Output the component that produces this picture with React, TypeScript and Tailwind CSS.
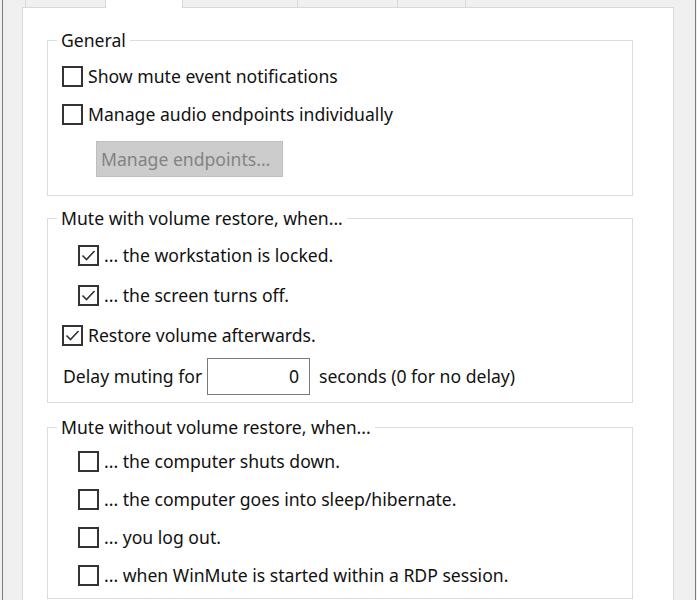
import React from "react";

function CheckBox({ checked }: { checked?: boolean }) {
  return (
    <div className="flex h-[21px] w-[21px] shrink-0 items-center justify-center border-2 border-[#333333] bg-white">
      {checked ? (
        <svg width="17" height="17" viewBox="0 0 17 17" fill="none">
          <path d="M2.5 8.5 L6.5 12.5 L14.5 4" stroke="#333333" strokeWidth="1.6" />
        </svg>
      ) : null}
    </div>
  );
}

function Row({
  label,
  checked,
  indent,
  h,
}: {
  label: string;
  checked?: boolean;
  indent?: boolean;
  h: string;
}) {
  return (
    <div className={`flex items-center gap-[5px] ${h} ${indent ? "pl-[30px]" : "pl-[14px]"}`}>
      <CheckBox checked={checked} />
      <span className="whitespace-nowrap">{label}</span>
    </div>
  );
}

export default function App() {
  return (
    <div
      className="h-[600px] w-[697px] overflow-hidden bg-[#f0f0f0] pl-[2px] pr-[1px] text-[17.6px] text-[#111111]"
      style={{ fontFamily: '"Noto Sans", "Open Sans", sans-serif' }}
    >
      <div className="flex h-full flex-col border-x border-[#7a7a7a] pl-[19px] pr-[21px]">
        {/* tab strip */}
        <div className="flex h-[8px] shrink-0">
          <div className="w-[3px] border-b border-[#d9d9d9]" />
          <div className="w-[81px] border-x border-b border-[#d9d9d9] bg-[#f0f0f0]" />
          <div className="w-[76px] bg-white" />
          <div className="w-[116px] border-x border-b border-[#d9d9d9] bg-[#f0f0f0]" />
          <div className="w-[100px] border-r border-b border-[#d9d9d9] bg-[#f0f0f0]" />
          <div className="w-[68px] border-r border-b border-[#d9d9d9] bg-[#f0f0f0]" />
          <div className="flex-1 border-b border-[#d9d9d9]" />
        </div>
        {/* panel */}
        <div className="flex-1 border-x border-[#d9d9d9] bg-white pl-[24px] pr-[40px] pt-[21px]">
          <fieldset className="border border-[#dcdcdc] pb-[18px]">
            <legend className="ml-[9px] px-[4px] leading-[22px]">General</legend>
            <div className="mt-[6px]">
              <Row h="h-[38px]" label="Show mute event notifications" />
              <Row h="h-[38px]" label="Manage audio endpoints individually" />
              <div className="mt-[8px] pl-[48px]">
                <div className="flex h-[36px] w-[187px] items-center border border-[#bfbfbf] bg-[#cccccc] pl-[4px] text-[#838383]">
                  Manage endpoints...
                </div>
              </div>
            </div>
          </fieldset>

          <fieldset className="mt-[11px] border border-[#dcdcdc] pb-[5px]">
            <legend className="ml-[9px] px-[4px] leading-[22px]">Mute with volume restore, when...</legend>
            <div className="mt-[6px]">
              <Row h="h-[40px]" indent checked label="... the workstation is locked." />
              <Row h="h-[40px]" indent checked label="... the screen turns off." />
              <Row h="h-[40px]" checked label="Restore volume afterwards." />
              <div className="flex h-[42px] items-center pl-[15px]">
                <span className="w-[144px] whitespace-nowrap">Delay muting for</span>
                <div className="flex h-[37px] w-[103px] items-center justify-end border border-[#7a7a7a] bg-white pr-[10px]">
                  0
                </div>
                <span className="ml-[9px] whitespace-nowrap">seconds (0 for no delay)</span>
              </div>
            </div>
          </fieldset>

          <fieldset className="mt-[13px] border border-[#dcdcdc] pb-[4px]">
            <legend className="ml-[9px] px-[4px] leading-[22px]">Mute without volume restore, when...</legend>
            <div className="mt-[4px]">
              <Row h="h-[38px]" indent label="... the computer shuts down." />
              <Row h="h-[38px]" indent label="... the computer goes into sleep/hibernate." />
              <Row h="h-[38px]" indent label="... you log out." />
              <Row h="h-[38px]" indent label="... when WinMute is started within a RDP session." />
            </div>
          </fieldset>
        </div>
      </div>
    </div>
  );
}
